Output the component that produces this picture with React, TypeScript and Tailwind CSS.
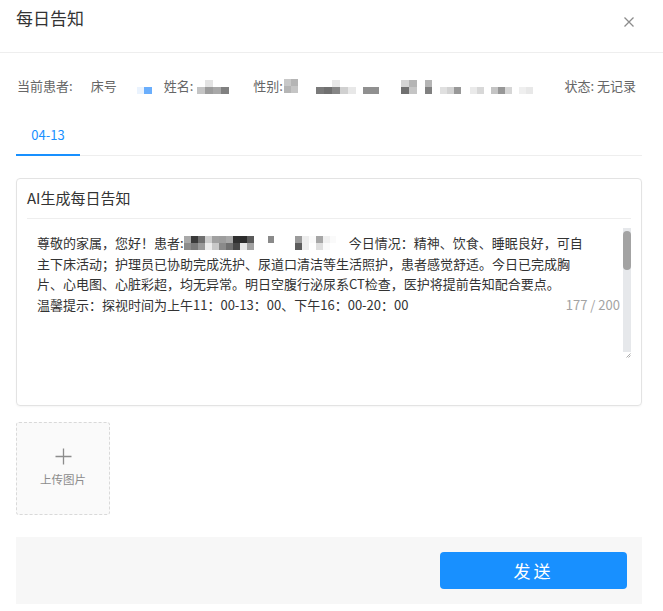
import React from "react";

type Cell = { w?: number; t?: string; b?: string };

function Blur({ cells, h = 7, className = "" }: { cells: Cell[]; h?: number; className?: string }) {
  return (
    <span className={"inline-flex align-middle " + className}>
      {cells.map((c, i) => (
        <span key={i} className="flex flex-col">
          <span style={{ width: c.w ?? 7, height: h, background: c.t ?? "transparent" }} />
          <span style={{ width: c.w ?? 7, height: h, background: c.b ?? "transparent" }} />
        </span>
      ))}
    </span>
  );
}

const font = { fontFamily: '"Noto Sans CJK SC", "Noto Sans", "Liberation Sans", sans-serif' };

export default function App() {
  return (
    <div className="w-[663px] h-[611px] bg-white overflow-hidden text-[#333]" style={font}>
      {/* header */}
      <div className="h-[53px] border-b border-[#eeeeee] flex items-start justify-between pl-4 pr-[28px] pt-[6px]">
        <div className="text-[17px] leading-[24px] text-[#333]">每日告知</div>
        <svg width="12" height="12" viewBox="0 0 12 12" className="mt-[10px]">
          <path d="M1.5 1.5 L10.5 10.5 M10.5 1.5 L1.5 10.5" stroke="#8c8c8c" strokeWidth="1.3" />
        </svg>
      </div>

      <div className="pl-4 pr-[21px]">
        {/* info row */}
        <div className="mt-[24px] h-[18px] flex items-center text-[13px] text-[#666] leading-[18px]">
          <span className="ml-[1px]">当前患者:</span>
          <span className="ml-[18px]">床号</span>
          <Blur
            className="ml-[20px] mt-[2px]"
            cells={[
              { w: 7, t: "#fff", b: "#eaf3fe" },
              { w: 8, t: "#fff", b: "#6aaefc" },
            ]}
            h={7}
          />
          <span className="ml-[12px]">姓名:</span>
          <Blur
            className="ml-[4px] mt-[2px]"
            cells={[
              { w: 8, t: "#fff", b: "#c4c4c4" },
              { w: 8, t: "#e3e3e3", b: "#9c9c9c" },
              { w: 8, t: "#fff", b: "#a8a8a8" },
              { w: 8, t: "#fff", b: "#808080" },
            ]}
            h={7}
          />
          <span className="ml-[24px]">性别:</span>
          <Blur
            className="ml-[1px]"
            cells={[
              { w: 7, t: "#c8c8c8", b: "#b5b5b5" },
              { w: 7, t: "#b5b5b5", b: "#c5c5c5" },
            ]}
            h={7}
          />
          <Blur
            className="ml-[18px] mt-[2px]"
            cells={[
              { w: 8, t: "#fff", b: "#7a7a7a" },
              { w: 8, t: "#fff", b: "#707070" },
              { w: 8, t: "#e8e8e8", b: "#868686" },
              { w: 8, t: "#fff", b: "#d0d0d0" },
              { w: 8, t: "#fff", b: "#e8e8e8" },
            ]}
            h={7}
          />
          <Blur
            className="ml-[7px] mt-[2px]"
            cells={[
              { w: 8, t: "#fff", b: "#909090" },
              { w: 8, t: "#fff", b: "#909090" },
            ]}
            h={7}
          />
          <Blur
            className="ml-[22px] mt-[2px]"
            cells={[
              { w: 8, t: "#d4d4d4", b: "#707070" },
              { w: 8, t: "#b5b5b5", b: "#c5c5c5" },
              { w: 8, t: "#fff", b: "#fff" },
              { w: 7, t: "#b5b5b5", b: "#808080" },
            ]}
            h={7}
          />
          <Blur
            className="ml-[8px] mt-[2px]"
            cells={[
              { w: 7, t: "#fff", b: "#e0e0e0" },
              { w: 7, t: "#fff", b: "#d2d2d2" },
              { w: 7, t: "#fff", b: "#989898" },
              { w: 9, t: "#fff", b: "#fff" },
              { w: 7, t: "#fff", b: "#eaeaea" },
              { w: 7, t: "#fff", b: "#d8d8d8" },
              { w: 7, t: "#fff", b: "#fff" },
              { w: 7, t: "#fff", b: "#c4c4c4" },
              { w: 7, t: "#fff", b: "#979797" },
              { w: 7, t: "#fff", b: "#d6d6d6" },
              { w: 7, t: "#fff", b: "#fff" },
              { w: 7, t: "#fff", b: "#efefef" },
              { w: 7, t: "#fff", b: "#e8e8e8" },
            ]}
            h={7}
          />
          <span className="ml-auto mr-[6px]">状态: 无记录</span>
        </div>

        {/* tabs */}
        <div className="mt-[24px] border-b border-[#eeeeee] flex">
          <div className="w-[64px] border-b-2 border-[#1890ff] -mb-[1px] h-[37px] flex items-start justify-center pt-[7px] text-[13px] text-[#1890ff] leading-[18px]">
            04-13
          </div>
        </div>

        {/* card */}
        <div className="mt-[22px] border border-[#e3e3e3] rounded-[4px] h-[228px] px-[10px] shadow-[0_1px_2px_rgba(0,0,0,0.04)]">
          <div className="h-[40px] border-b border-[#eeeeee] flex items-center text-[15px] text-[#333]">AI生成每日告知</div>
          <div className="mt-[9px] h-[130px] flex">
            <div className="flex-1 relative pl-[10px] pt-[5px] text-[13px] leading-[20.6px] text-[#333]">
              <div className="whitespace-nowrap">
                尊敬的家属，您好！患者:
                <Blur
                  className="-mt-[2px]"
                  h={7}
                  cells={[
                    { w: 7, t: "#a9a9a9", b: "#8c8c8c" },
                    { w: 7, t: "#3a3a3a", b: "#7a7a7a" },
                    { w: 7, t: "#6f6f6f", b: "#9a9a9a" },
                    { w: 7, t: "#cdcdcd", b: "#ececec" },
                    { w: 7, t: "#a0a0a0", b: "#c8c8c8" },
                    { w: 7, t: "#9d9d9d", b: "#8a8a8a" },
                    { w: 7, t: "#a8a8a8", b: "#707070" },
                    { w: 7, t: "#2f2f2f", b: "#474747" },
                    { w: 7, t: "#2c2c2c", b: "#e8e8e8" },
                    { w: 7, t: "#5a5a5a", b: "#a3a3a3" },
                    { w: 7, t: "#fff", b: "#fff" },
                    { w: 7, t: "#fff", b: "#fff" },
                    { w: 6, t: "#8a8a8a", b: "#fff" },
                    { w: 7, t: "#fff", b: "#fff" },
                    { w: 7, t: "#fff", b: "#fff" },
                    { w: 7, t: "#fff", b: "#fff" },
                    { w: 7, t: "#9b9b9b", b: "#5c5c5c" },
                    { w: 7, t: "#ededed", b: "#ededed" },
                    { w: 7, t: "#fafafa", b: "#fff" },
                    { w: 7, t: "#a6a6a6", b: "#dedede" },
                    { w: 7, t: "#f0f0f0", b: "#fafafa" },
                    { w: 6, t: "#fafafa", b: "#fff" },
                  ]}
                />
                <span className="ml-[13px]">今日情况：精神、饮食、睡眠良好，可自</span>
              </div>
              <div className="whitespace-nowrap">主下床活动；护理员已协助完成洗护、尿道口清洁等生活照护，患者感觉舒适。今日已完成胸</div>
              <div className="whitespace-nowrap">片、心电图、心脏彩超，均无异常。明日空腹行泌尿系CT检查，医护将提前告知配合要点。</div>
              <div className="whitespace-nowrap flex">
                <span>温馨提示：探视时间为上午11：00-13：00、下午16：00-20：00</span>
                <span className="ml-auto mr-[3px] text-[13px] text-[#a3a3a3]">177 / 200</span>
              </div>
            </div>
            {/* scrollbar */}
            <div className="w-[8px] flex flex-col">
              <div className="flex-1 bg-[#e6e8eb] pt-[3px]">
                <div className="h-[39px] rounded-[4px] bg-[#a3a3a3]" />
              </div>
              <div className="h-[6px] bg-white flex items-end justify-end">
                <svg width="5" height="5" viewBox="0 0 5 5">
                  <path d="M4.5 0.5 L0.5 4.5 M4.5 2.5 L2.5 4.5" stroke="#888" strokeWidth="0.7" />
                </svg>
              </div>
            </div>
          </div>
        </div>

        {/* upload */}
        <div className="mt-[16px] w-[94px] h-[93px] border border-dashed border-[#d9d9d9] rounded-[3px] bg-[#fafafa] flex flex-col items-center pt-[25px]">
          <svg width="17" height="17" viewBox="0 0 17 17">
            <path d="M8.5 0.5 V16.5 M0.5 8.5 H16.5" stroke="#8c8c8c" strokeWidth="1.3" />
          </svg>
          <div className="mt-[6px] text-[11.5px] text-[#8c8c8c] leading-[16px]">上传图片</div>
        </div>

        {/* footer */}
        <div className="mt-[22px] h-[67px] bg-[#f7f7f7] flex items-center justify-end pr-[15px]">
          <button className="w-[187px] h-[37px] rounded-[4px] bg-[#1890ff] text-white text-[17px] tracking-[3px] flex items-center justify-center">
            发送
          </button>
        </div>
      </div>
    </div>
  );
}
